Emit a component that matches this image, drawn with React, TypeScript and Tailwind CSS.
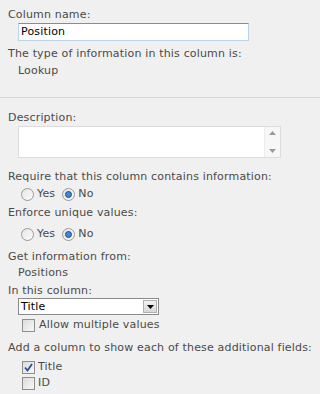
import React from 'react';

function Radio({ checked }: { checked?: boolean }) {
  return (
    <span className="flex h-[13px] w-[13px] items-center justify-center rounded-full border border-[#9a9a9a] bg-gradient-to-br from-[#e4e4e4] to-[#fcfcfc]">
      {checked && <span className="h-[7px] w-[7px] rounded-full border border-[#1d4f84] bg-[#3b8ad6]" />}
    </span>
  );
}

function Checkbox({ checked }: { checked?: boolean }) {
  return (
    <span className="flex h-[13px] w-[13px] items-center justify-center border border-[#8e8e8e] bg-gradient-to-br from-[#dcdcdc] to-[#f8f8f8]">
      {checked && (
        <svg width="9" height="9" viewBox="0 0 9 9">
          <path d="M1 4.5 L3.5 7.5 L8 1" fill="none" stroke="#2d4f8f" strokeWidth="1.8" />
        </svg>
      )}
    </span>
  );
}

function RadioRow() {
  return (
    <div className="flex h-[16px] items-center pl-[13px]">
      <Radio />
      <span className="ml-[3px]">Yes</span>
      <span className="ml-[7px]" />
      <Radio checked />
      <span className="ml-[3px]">No</span>
    </div>
  );
}

export default function App() {
  return (
    <div
      className="h-[394px] w-[320px] overflow-hidden bg-[#f0f0f0] text-[11px] leading-[14px] tracking-[0.17px] text-[#4a4a4a]"
      style={{ fontFamily: '"DejaVu Sans", Verdana, sans-serif' }}
    >
      <div className="px-[8px] pt-[8px]">
        <div>Column name:</div>
        <div className="ml-[10px] mt-[1px] flex h-[18px] w-[231px] items-center border border-[#b8d3ea] border-t-[#5d98cd] bg-white px-[2px] text-black">
          Position
        </div>
        <div className="mt-[6px]">The type of information in this column is:</div>
        <div className="ml-[10px] mt-[3px]">Lookup</div>
      </div>

      <div className="mt-[19px] border-t border-[#d6d6d6]" />

      <div className="px-[8px]">
        <div className="mt-[13px]">Description:</div>
        <div className="ml-[10px] mt-[1px] flex h-[32px] w-[263px] border border-[#dcdcdc] bg-white">
          <div className="flex-1" />
          <div className="flex w-[16px] flex-col items-center justify-between border-l border-[#ececec] bg-[#f7f7f7] py-[4px]">
            <svg width="7" height="4" viewBox="0 0 7 4"><path d="M0 4 L3.5 0 L7 4 Z" fill="#9a9a9a" /></svg>
            <svg width="7" height="4" viewBox="0 0 7 4"><path d="M0 0 L3.5 4 L7 0 Z" fill="#9a9a9a" /></svg>
          </div>
        </div>

        <div className="mt-[12px]">Require that this column contains information:</div>
        <div className="mt-[2px]">
          <RadioRow />
        </div>

        <div className="mt-[4px]">Enforce unique values:</div>
        <div className="mt-[6px]">
          <RadioRow />
        </div>

        <div className="mt-[8px]">Get information from:</div>
        <div className="ml-[10px] mt-[2px]">Positions</div>

        <div className="mt-[4px]">In this column:</div>
        <div className="ml-[10px] mt-[0px] flex h-[17px] w-[141px] items-center border border-[#8a8a8a] bg-white text-black">
          <span className="flex-1 pl-[2px]">Title</span>
          <span className="mr-[1px] flex h-[13px] w-[14px] items-center justify-center border border-[#b0b0b0] bg-gradient-to-b from-[#f2f2f2] to-[#d8d8d8]">
            <svg width="7" height="4" viewBox="0 0 7 4"><path d="M0 0 L3.5 4 L7 0 Z" fill="#000" /></svg>
          </span>
        </div>
        <div className="ml-[14px] mt-[3px] flex h-[14px] items-center">
          <Checkbox />
          <span className="ml-[4px]">Allow multiple values</span>
        </div>

        <div className="mt-[9px]">Add a column to show each of these additional fields:</div>
        <div className="ml-[14px] mt-[5px] flex h-[14px] items-center">
          <Checkbox checked />
          <span className="ml-[3px]">Title</span>
        </div>
        <div className="ml-[14px] mt-[2px] flex h-[14px] items-center">
          <Checkbox />
          <span className="ml-[3px]">ID</span>
        </div>
      </div>
    </div>
  );
}
